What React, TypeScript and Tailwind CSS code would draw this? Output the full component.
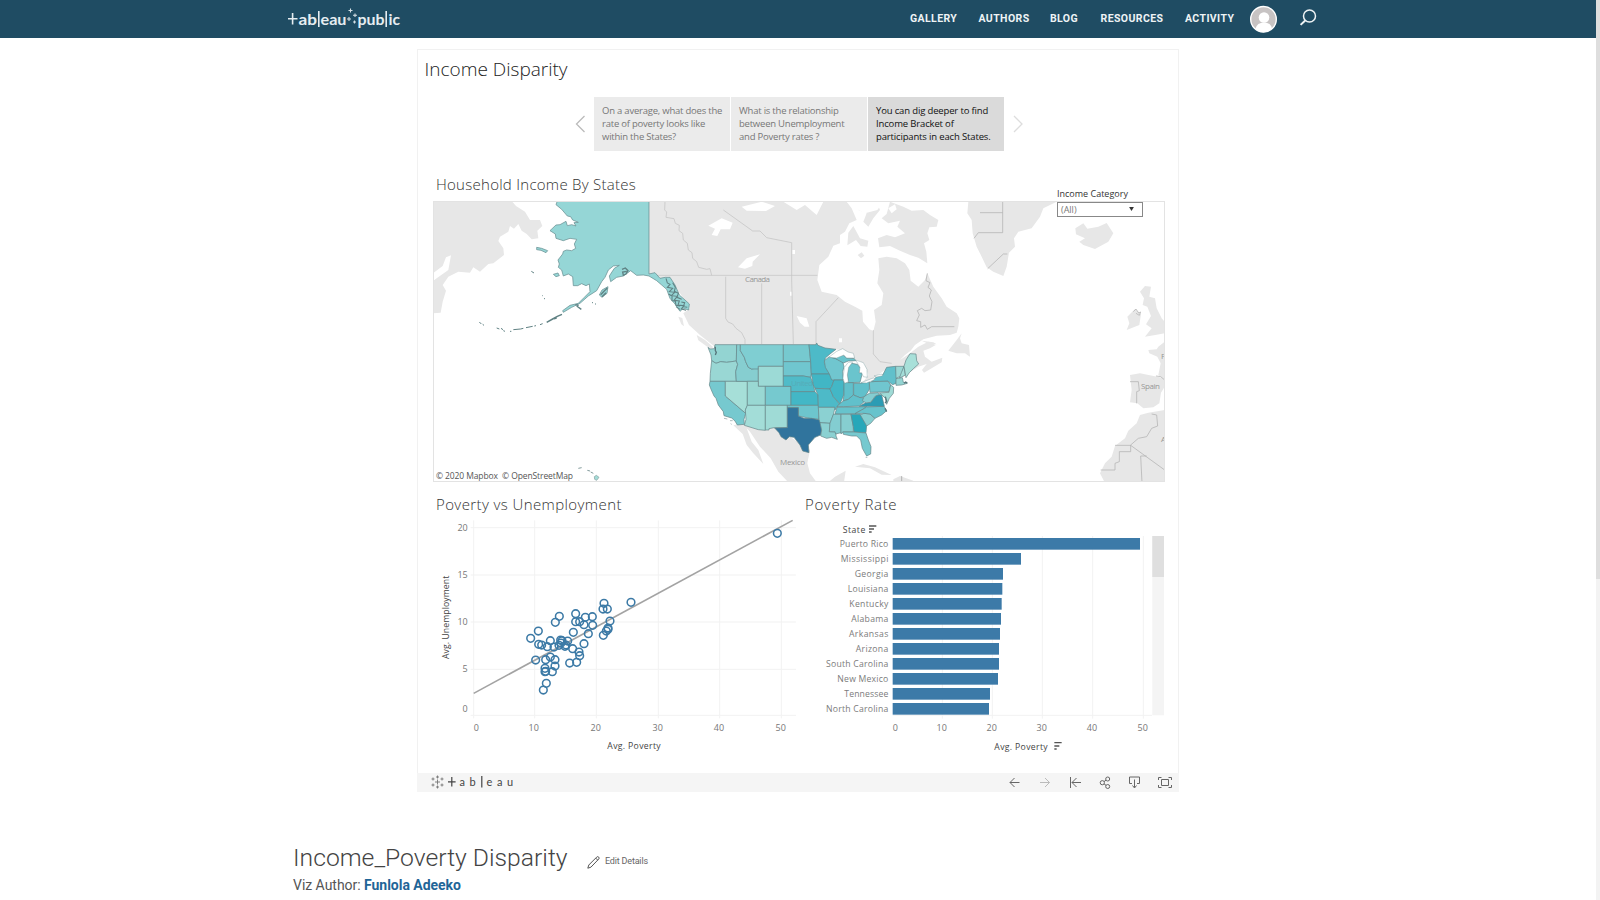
import React from "react";

type Pt = [number, number];

const STATES: [string, string][] = [
  ["24,52 30,57 43,56 45,44 110,44 109,93 80,97 62,95 48,100 35,92 33,75", "#93d4d2"],
  ["35,92 48,100 62,95 80,97 109,93 113,103 107,125 109,154 30,154 31,130", "#99d7d4"],
  ["30,154 76,154 76,198 137,250 132,268 133,283 112,285 105,273 95,264 72,257 70,245 55,225 48,205 42,198 34,180 28,165", "#76c9cf"],
  ["76,154 142,154 142,226 136,240 137,250 76,198", "#a6dfd8"],
  ["110,44 121,44 121,62 133,82 137,95 145,112 155,117 175,113 175,154 109,154 107,125 113,103 109,93", "#86ced0"],
  ["121,44 250,44 250,109 175,109 175,117 155,117 145,112 137,95 133,82 121,62", "#7fced2"],
  ["175,109 250,109 250,169 175,169", "#9cdad6"],
  ["142,154 175,154 175,169 196,169 196,226 142,226", "#99d8d3"],
  ["196,169 273,169 273,226 196,226", "#76c9cf"],
  ["142,226 196,226 196,301 175,299 133,286 138,268 136,240", "#a3ddd8"],
  ["196,226 262,226 262,293 222,293 207,296 207,300 196,300", "#9fdbd6"],
  ["250,44 327,44 332,95 250,95", "#76c9cf"],
  ["250,95 332,95 334,132 332,142 310,138 250,138", "#70c6cf"],
  ["250,138 310,138 332,142 340,165 345,185 273,185 273,169 250,169", "#50bbc8"],
  ["273,185 345,185 354,195 355,226 273,226", "#43b7c6"],
  ["262,226 355,226 357,268 330,265 295,258 295,233 262,233", "#6dc5cd"],
  ["262,233 295,233 295,258 312,265 335,265 360,270 365,300 362,315 345,322 325,345 327,368 308,363 300,345 282,322 268,320 258,330 243,320 237,308 224,294 262,293", "#30749d"],
  ["327,44 348,44 350,39 354,46 375,54 408,58 390,72 376,84 373,97 380,115 390,132 334,132 332,95", "#4dbac8"],
  ["334,132 390,132 402,150 395,170 390,177 345,175 340,165", "#41b6c5"],
  ["345,175 390,177 400,200 418,222 410,232 405,240 403,232 355,232 354,195", "#4dbac8"],
  ["355,232 405,232 400,255 390,280 360,278 357,268", "#8bd1d2"],
  ["360,278 390,280 388,305 408,306 408,318 412,328 395,322 380,325 362,318 365,300", "#8bd1d2"],
  ["373,92 388,80 405,85 428,95 432,110 428,125 430,150 395,150 388,132 376,112", "#70c6cf"],
  ["402,150 429,150 433,160 431,195 420,222 400,200 390,177 395,170", "#43b7c6"],
  ["444,112 455,100 472,103 482,115 478,128 487,130 480,157 445,158 442,135", "#6ac4cd"],
  ["392,82 430,76 440,84 463,86 468,92 445,93 430,99 405,85", "#6ac4cd"],
  ["432,158 460,158 460,195 445,208 429,213 432,195", "#61c0cb"],
  ["461,160 480,160 508,155 508,178 495,200 480,203 461,195", "#61c0cb"],
  ["411,230 418,222 430,213 445,208 460,195 480,203 490,203 495,213 478,228 430,230", "#61c0cb"],
  ["405,252 411,232 500,230 485,240 465,251", "#67c3cc"],
  ["390,280 400,253 423,253 423,308 407,312 405,305 388,305", "#83cdd1"],
  ["423,253 453,253 460,290 460,306 428,306 423,312", "#86ced0"],
  ["453,253 481,253 500,285 498,308 462,306 460,290", "#27a7b9"],
  ["428,306 460,306 498,309 505,330 513,350 512,372 500,378 487,355 482,330 470,318 455,318 430,313", "#76c9cf"],
  ["481,255 492,250 510,252 525,265 512,280 500,288", "#86ced0"],
  ["465,251 485,240 500,231 552,229 560,242 545,255 525,265 510,252 492,250", "#67c3cc"],
  ["478,229 497,218 512,217 530,195 545,194 553,229", "#2b9cb4"],
  ["487,212 492,200 508,190 535,188 538,194 526,198 512,217 498,219", "#83cdd1"],
  ["508,158 515,155 563,153 572,165 567,185 510,187", "#70c6cf"],
  ["515,155 530,140 548,135 560,112 587,109 590,145 588,160 578,164 563,153", "#61c0cb"],
  ["587,109 612,109 604,138 588,145", "#99d7d4"],
  ["612,109 616,135 598,145 604,128", "#a3ddd8"],
  ["612,109 618,90 630,71 648,72 650,92 656,102 640,116 628,128 618,143", "#a8e0d9"],
  ["588,146 607,143 610,157 622,160 605,165 588,166", "#93d4d2"],
  ["572,165 581,172 580,190 568,205 560,223 556,205 545,194 538,189 567,187", "#9fdbd6"],
];

const POINTS: Pt[] = [
  [1042, 131], [603, 338], [522, 341], [519, 358], [532, 358], [437, 372], [388, 380], [466, 383], [487, 381],
  [376, 398], [437, 396], [449, 396], [540, 394], [462, 405], [488, 407], [534, 415], [325, 424], [430, 428],
  [475, 432], [534, 419], [529, 424], [520, 437], [302, 446], [361, 453], [392, 451], [396, 453], [413, 454],
  [326, 464], [335, 466], [352, 471], [372, 472], [387, 467], [393, 460], [405, 470], [408, 466], [462, 462],
  [428, 477], [447, 487], [449, 498], [361, 502], [317, 511], [347, 510], [375, 510], [419, 520], [440, 518],
  [375, 529], [345, 536], [345, 546], [347, 545], [367, 546], [349, 581], [340, 601],
];

const BARS: [string, number, number][] = [
  ["Puerto Rico", 1020, 119], ["Mississippi", 663, 122], ["Georgia", 609, 164], ["Louisiana", 607, 143],
  ["Kentucky", 605, 148], ["Alabama", 603, 154], ["Arkansas", 600, 147], ["Arizona", 597, 167],
  ["South Carolina", 597, 78], ["New Mexico", 594, 112], ["Tennessee", 570, 133], ["North Carolina", 567, 78],
];

const SANS = "font-['Open_Sans','Noto_Sans',sans-serif]";

function IncomeMap() {
  return (
    <svg viewBox="433 201 732 281" className="block h-[281px] w-[732px]" fill="none">
      <g transform="translate(430 170) scale(.333333)">
        <g fill="#e7e7e7">
          <path d="M9,93H245L258,108L285,125L300,150L330,150L337,168L322,182L325,205L305,208L290,192L275,182L265,162L252,176L240,168L235,185L210,200L205,213L220,235L222,255L190,280L175,282L150,305L130,292L120,308L85,305L55,320L38,345L48,362L38,395L32,428L9,430Z" />
          <path d="M9,310L38,288L48,262L63,256L55,300L20,325L9,333Z" fill="#fff" />
          <path d="M745,440l12,4 5,25-8-6ZM800,495l25,15 25,22-10,4-35-25Z" />
        </g>
        <g transform="translate(1080 60)">
          <path fill="#e7e7e7" d="M-423,35H170L185,55L200,90L178,100L165,125L150,135L150,160L130,167L115,200L88,225L82,270L95,305L140,315L165,335L195,350L217,362L219,395L238,418L250,423L257,395L252,360L275,345L280,310L262,280L268,240L265,205L290,200L320,205L345,220L358,240L362,272L385,290L405,270L412,250L430,290L455,325L470,350L500,370L508,385L505,410L500,428L480,435L440,437L400,448L375,465L362,482L345,495L330,510L360,490L385,470L415,455L437,465L420,475L400,482L405,500L425,515L457,503L455,517L425,535L402,548L396,540L410,522L385,530L340,560L285,540L250,565L215,582L235,555L222,520L190,505L160,480L80,475L-220,475L-270,435L-303,405L-320,370L-300,355L-330,310L-375,270L-423,255Z" />
          <g fill="#e7e7e7">
            <path d="M300,35L340,50L365,62L400,60L420,75L445,90L440,110L418,112L412,130L418,150L402,160L409,185L412,220L385,203L360,195L330,182L300,168L268,172L264,145L290,135L315,142L345,130L322,110L330,92L295,100L275,85L290,72Z" />
            <path d="M200,35H260L270,60L250,85L235,110L220,95L230,70L205,60Z" />
            <path d="M175,128L190,108L210,145L235,152L232,170L212,168L198,150L172,166Z" />
            <path d="M203,195l12,-8 8,10-10,8Z" />
            <path d="M515,430L500,450L475,482L500,490L525,490L540,500L537,465L515,460L510,445ZM395,452l35,5 10,6-25,-2Z" />
            <path d="M535,35H800L760,55L750,80L725,115L685,125L672,145L675,170L657,188L650,230L640,258L610,245L590,232L575,200L560,170L548,130L545,90L532,70Z" />
            <path d="M856,115L880,100L892,116L925,110L950,99L970,130L955,155L915,177L880,165L868,155L885,145L858,133Z" />
            <path d="M1050,305L1065,288L1083,290L1078,320L1095,325L1100,355L1115,385L1124,395V430L1100,434L1065,440L1085,415L1068,403L1083,378L1072,350L1058,345L1062,325Z" />
            <path d="M1012,380L1035,357L1053,372L1048,405L1010,420L1018,400Z" />
            <path d="M1124,455L1105,470L1100,478L1075,480L1078,490L1102,500L1112,520L1105,555L1124,570Z" />
            <path d="M1020,555L1050,550L1124,565V590L1113,608L1108,640L1090,652L1060,655L1042,640L1020,637L1025,600Z" />
            <path d="M1124,660L1075,668L1050,675L1040,700L1015,722L1005,745L975,768L965,800L945,820L930,850L945,879H1124Z" />
          </g>
          <g fill="#fff">
            <path d="M-245,107L-205,85L-172,98L-180,118L-208,118L-218,138L-235,135L-225,116ZM-156,232L-130,205L-90,193L-112,215L-113,228L-135,236ZM-145,50L-85,35L-45,48L-72,63L-130,62ZM-20,35H100L80,75L65,62L45,45L20,60Z" />
            <path d="M20,378L50,385L58,410L44,410L30,398ZM7,180h8v12h-8ZM0,305h6v12h-6ZM147,445h9v12h-9ZM170,35L280,35L262,60L225,70L195,55ZM295,55l20,-12 5,15-15,12Z" />
          </g>
          <g stroke="#c2c2c2" strokeWidth="2.2">
            <path d="M-375,35L-376,60L-370,66L-372,82L-348,86L-344,100L-332,106L-333,122L-322,130L-320,150L-308,160L-305,180L-294,188L-292,205L-280,215L-274,232L-250,238L-240,236L-235,256M-200,60L-112,123L-90,123L-70,143L5,158V270L10,462M-420,256H82M-193,260V385M-193,385L-186,396L-172,402L-162,415L-145,428L-135,448V462M-85,280V462M78,465V395L145,323M250,420V492L270,515L305,520" />
            <path stroke="#b0b0b0" d="M412,250L408,272L420,278L414,292L424,300L418,318L426,335L422,360L405,362L395,355L382,362L388,375L380,392L392,395L392,412L405,405L412,418L425,410H493" />
          </g>
          <g stroke="#b1b1b1" strokeWidth="2.2">
            <path d="M570,68H638M638,35V128H565L552,145M593,236L640,192H652M1030,365l8,-8 8,12 6,-3-4,10-10,-6M1098,558L1112,560L1124,570M1020,575L1045,575L1048,602L1040,605L1040,640M1085,672L1100,675L1103,708L1085,715L1070,740L1045,745L1022,765V785H988V815L975,820V840H932M975,766H1022L1124,840M1056,877L1052,798H1070" />
          </g>
        </g>
        <g transform="translate(810 480)">
          <path fill="#e7e7e7" d="M100,286L130,280L225,290L330,360L322,400L330,430L350,457H265L235,425L212,385L180,350L150,305L140,295L155,335L175,360L190,402L160,370L140,345L128,312ZM405,440L437,422L432,457H385ZM465,410L490,402L525,412L575,435L545,434L510,415ZM580,448L600,438L640,452L635,458H580ZM660,454h18v4h-18Z" />
          <path stroke="#999" strokeWidth="2" d="M605,438V458" />
          <g stroke="#66868a" strokeWidth="2.1" strokeLinejoin="round">
            {STATES.map(([p, c]) => <polygon key={p} points={p} fill={c} />)}
          </g>
          <g fill="#fff" stroke="#75989b" strokeWidth="1.2">
            <path d="M386,82L410,64L428,56L444,66L460,70L464,84L440,84L432,75L410,84Z" />
            <path d="M433,112L445,97L458,96L446,112L442,135L445,155L434,160L429,145Z" />
            <path d="M467,90L490,98L501,118L502,142L490,140L485,128L478,128L480,112Z" />
            <path d="M483,158L520,144L525,148L500,159ZM522,138L545,132L548,137L530,141Z" />
          </g>
          <path stroke="#57767b" strokeWidth="4" d="M46,50v12l3,5-3,8M612,160l5,-4 5,3M556,200l4,14-5,5M555,235l5,10" />
          <path stroke="#86999b" strokeWidth="2" d="M72,265l10,2M90,272h8M92,281l3,2M497,382h5" />
        </g>
        <g stroke="#688f91" strokeWidth="2.2" strokeLinejoin="round" fill="#95d6d6">
          <path d="M383,90H657V312L675,308L690,325L706,322L720,322L735,345L748,375L765,390L778,402L776,420L760,415L750,424L735,402L720,385L710,358L695,345L680,332L657,318L640,315L620,316L602,302L580,318L560,322L542,335L538,318L553,295L568,286L550,288L535,300L525,322L515,335L500,362L475,378L450,400L425,412L400,427L398,422L420,406L445,400L462,383L480,365L478,342L468,347L455,341L443,347L430,347L428,320L415,312L400,318L395,300L385,292L388,282L384,270L398,252L400,244L410,240L425,242L437,235L433,222L440,208L420,205L400,212L378,205L376,192L360,182L378,165L390,164L408,154L412,167L425,164L438,168L432,158L445,157L428,150L422,140L412,138L395,118L378,104Z" />
          <path d="M320,232l15,3 18,7-5,6-15,-7-13,-2ZM370,313l14,-4 4,8-10,3ZM508,375l8,-15 18,-10-3,20-15,12Z" />
        </g>
        <g stroke="#5f8183" strokeWidth="4">
          <path d="M708,325l4,14 8,4-8,9 16,3-10,10 16,2-10,10 18,2-10,12 16,2-4,12 18,2-8,10 14,4M716,372l10,6 0,14 10,2 2,12 12,2M728,338l8,14-3,12 12,6-4,12 14,6M754,396l10,2-4,12 12,2M738,410l12,8" strokeWidth="3.2" />
          <path d="M576,298l10,-4 8,8-6,10-8,4-2,-10 12,-2M512,374l10,-10 10,-10M516,380l12,-12M440,408l14,10M436,404l10,2" />
          <path d="M350,457l18,-10 14,-8 14,-6M372,446l8,-2" strokeWidth="4.5" />
          <path d="M148,456l6,6M158,463l4,3M200,474l8,3M213,475l6,4M220,482l5,2M240,484h4M250,479l22,-2 8,-2M288,473l20,-4M313,468l5,-1M330,464l8,-3M304,304l8,5M337,377h2M342,386h3M486,398h3M495,402h3" strokeWidth="3" />
        </g>
        <path d="M445,895l10,-2M472,901l8,2M482,906l8,4" stroke="#829b9c" strokeWidth="3" />
        <path d="M493,920l6,-4 8,6-7,9-6,-3Z" stroke="#829b9c" strokeWidth="2" fill="#a3ddd8" />
      </g>
      <g className={SANS} fontSize="8" fill="#979797">
        <text x="745" y="282" textLength="25">Canada</text>
        <text x="780" y="465" textLength="25">Mexico</text>
        <text x="1141" y="389" textLength="19">Spain</text>
        <text x="1161" y="359">F</text>
        <text x="1161" y="442">A</text>
        <text x="791" y="386" textLength="22" fill="#5c9fab" opacity=".5">United</text>
      </g>
      <text x="436" y="479" fontSize="8.5" textLength="137" className={SANS} fill="#555" xmlSpace="preserve">© 2020 Mapbox  © OpenStreetMap</text>
    </svg>
  );
}

function Scatter() {
  return (
    <svg viewBox="430 519 370 254" className="block h-[254px] w-[370px]" fill="none">
      <g transform="translate(430 489.7) scale(.333333)">
        <g stroke="#f2f2f2" strokeWidth="3">
          <path d="M131,92V686M314,92V686M499,92V686M685,92V686M869,92V686M1054,92V686M122,114H1098M122,256H1098M122,397H1098M122,539H1098M122,677H1098" />
        </g>
        <path d="M131,611L1088,92" stroke="#a3a3a3" strokeWidth="4.8" />
        <g stroke="#3c7aa6" strokeWidth="4.6">
          {POINTS.map(([x, y], i) => <circle key={i} cx={x} cy={y} r="11.5" />)}
        </g>
        <g className={SANS} fontSize="27" fill="#777">
          {[[20, 114], [15, 256], [10, 396], [5, 538], [0, 656]].map(([v, y]) => (
            <text key={v} x="113" y={y + 10} textAnchor="end">{v}</text>
          ))}
          {[139, 311, 497, 683, 867, 1052].map((x, i) => (
            <text key={x} x={x} y="723" textAnchor="middle">{i * 10}</text>
          ))}
        </g>
        <g className={SANS} fontSize="26" fill="#444">
          <text x="532" y="779" textLength="160">Avg. Poverty</text>
          <text transform="translate(56 508) rotate(-90)" textLength="250">Avg. Unemployment</text>
        </g>
      </g>
    </svg>
  );
}

function Bars() {
  return (
    <svg viewBox="800 519 374 254" className="block h-[254px] w-[374px]" fill="none">
      <g transform="translate(800 490) scale(.333333)">
        <path d="M427,138V686M577,138V686M727,138V686M878,138V686M1030,138V686M278,676H1056" stroke="#f2f2f2" strokeWidth="3" />
        <path d="M1057,138h35v538h-35Z" fill="#f4f4f4" />
        <path d="M1057,138h35v123h-35Z" fill="#dfdfdf" />
        <g className={SANS} fontSize="26">
          {BARS.map(([name, end, left], i) => (
            <g key={name}>
              <rect x="278" y={144 + i * 45} width={end - 278} height="35" fill="#3c7aa8" />
              <text x={left} y={171 + i * 45} textLength={265 - left} fill="#7b7b7b">{name}</text>
            </g>
          ))}
          <text x="128" y="128" textLength="68" fill="#444">State</text>
          <text x="583" y="779" textLength="160" fill="#444">Avg. Poverty</text>
        </g>
        <path d="M207,108h22M207,117h15M207,126h8M763,758h22M763,768h15M763,777h7" stroke="#555" strokeWidth="4" />
        <g className={SANS} fontSize="27" fill="#777">
          {[286, 425, 575, 725, 876, 1028].map((x, i) => (
            <text key={x} x={x} y="723" textAnchor="middle">{i * 10}</text>
          ))}
        </g>
      </g>
    </svg>
  );
}

function Logo() {
  return (
    <svg viewBox="288 6 114 26" className="block h-[26px] w-[114px]" fill="none">
      <path d="M292.6 13v11.5M288 18.8h9.5M318.8 11v16M386.2 11v16" stroke="#e6edf1" strokeWidth="1.6" />
      <g fill="#e6edf1" fontSize="15.5" className="font-['Lato',sans-serif]">
        <text x="298.5" y="24.5" textLength="18.5" lengthAdjust="spacingAndGlyphs">ab</text>
        <text x="320.5" y="24.5" textLength="26" lengthAdjust="spacingAndGlyphs">eau</text>
        <text x="357.5" y="24.5" textLength="27" lengthAdjust="spacingAndGlyphs">pub</text>
        <text x="388.5" y="24.5" textLength="11.5" lengthAdjust="spacingAndGlyphs">ic</text>
      </g>
      <path d="M350.5 8.5v4M348.5 10.5h4M349 17v4M347 19h4M355 13.5v3.5M353 15.2h4M354.5 20.5v3M353 22h3" stroke="#d5e0e6" strokeWidth="1.1" />
    </svg>
  );
}

function Toolbar() {
  return (
    <div className="-mx-px flex h-[19px] items-center justify-between bg-[#f5f5f5] pr-[5px] pl-[13px]">
      <svg viewBox="430 773 86 19" className="block h-[19px] w-[86px]" fill="none">
        <path d="M437.5 779.5v5M435 782h5M437.5 775.5v3M436 777h3M437.5 785.5v3M436 787h3M433 777.5v3M431.5 779h3M433 783.5v3M431.5 785h3M442 777.5v3M440.5 779h3M442 783.5v3M440.5 785h3" stroke="#777" strokeWidth=".9" />
        <path d="M451.8 777v9.5M448 781.8h7.6M481.8 776v11.5" stroke="#444" strokeWidth="1.2" />
        <g className="font-['Lato',sans-serif]" fontSize="11" fill="#444">
          <text x="459.5" y="786">a</text><text x="469.5" y="786">b</text><text x="486.5" y="786">e</text><text x="497" y="786">a</text><text x="507" y="786">u</text>
        </g>
      </svg>
      <svg viewBox="1006 773 168 19" className="block h-[19px] w-[168px]" fill="none" stroke="#666" strokeWidth="1">
        <path d="M1019.5 782.5h-9.5M1014.5 778l-4.5 4.5 4.5 4.5" />
        <path d="M1040 782.5h9.5M1045 778l4.5 4.5-4.5 4.5" stroke="#bbb" />
        <path d="M1070.5 777v11M1081 782.5h-9M1076.5 778l-4.5 4.5 4.5 4.5" />
        <circle cx="1102.3" cy="782.7" r="2.1" /><circle cx="1107.7" cy="779" r="2" /><circle cx="1107.7" cy="786.5" r="2" />
        <path d="M1104 781.6l2-1.4M1104 783.8l2 1.5" />
        <path d="M1132 783.5h-2.5v-6.5h10v6.5h-2.5M1134.5 779.5v8M1132.5 785.5l2 2.5 2-2.5" />
        <path d="M1161.5 779.5h7v6h-7ZM1158.5 780v-2.5h3M1168.5 777.5h3v2.5M1171.5 785v2.5h-3M1161.5 787.5h-3v-2.5" />
      </svg>
    </div>
  );
}

function StoryPoint({ lines, active }: { lines: string[]; active?: boolean }) {
  return (
    <div className={`h-[54px] w-[136px] pt-[7px] pl-2 text-[9.5px] leading-[13px] whitespace-nowrap ${active ? "bg-[#dadada] text-[#111]" : "bg-[#ebebeb] text-[#777]"}`}>
      {lines.map((l) => <div key={l} className={active ? "tracking-[-0.15px]" : "tracking-[-0.22px]"}>{l}</div>)}
    </div>
  );
}

export default function App() {
  return (
    <div className={`flex h-[900px] w-[1600px] overflow-hidden bg-white ${SANS}`}>
      <div className="flex w-[1596px] flex-col">
        <header className="flex h-[38px] shrink-0 items-center bg-[#1f4c63] pl-[288px] font-['Roboto',sans-serif] text-[10.5px] font-bold text-[#eef3f5]">
          <Logo />
          <nav className="ml-[508px] flex tracking-[0.4px] whitespace-nowrap">
            <a className="w-[68.5px]">GALLERY</a>
            <a className="w-[71.5px]">AUTHORS</a>
            <a className="w-[50.5px]">BLOG</a>
            <a className="w-[84.5px]">RESOURCES</a>
            <a className="w-[65px]">ACTIVITY</a>
          </nav>
          <svg viewBox="0 0 70 28" className="block h-7 w-[70px]" fill="none">
            <circle cx="13.5" cy="14.3" r="12.8" fill="#c7c3c3" stroke="#fff" strokeWidth="1.4" />
            <circle cx="14" cy="12.5" r="5.3" fill="#fff" />
            <path d="M5.5 23.5Q7 17.5 14 17.5T22 23.5Q18 27.3 13.5 27.3T5.5 23.5Z" fill="#fff" />
            <circle cx="59.5" cy="11" r="6" stroke="#eef3f5" strokeWidth="1.5" />
            <path d="M55.2 15.5l-4.6 4.4" stroke="#eef3f5" strokeWidth="2" />
          </svg>
        </header>

        <section className="relative mt-[11px] ml-[417px] flex h-[743px] w-[762px] shrink-0 flex-col border border-b-0 border-[#f1f1f1]">
          <h2 className="h-[47px] pt-[5px] pl-[6.5px] text-[19px] leading-[28px] font-light text-[#222]">Income Disparity</h2>
          <div className="flex h-[54px] items-center pl-[156px]">
            <svg viewBox="0 0 20 20" className="h-5 w-5" fill="none"><path d="M10.5 2L2.5 10l8 8" stroke="#bbb" strokeWidth="1.3" /></svg>
            <div className="flex gap-px">
              <StoryPoint lines={["On a average, what does the", "rate of poverty looks like", "within the States?"]} />
              <StoryPoint lines={["What is the relationship", "between Unemployment", "and Poverty rates ?"]} />
              <StoryPoint active lines={["You can dig deeper to find", "Income Bracket of", "participants in each States."]} />
            </div>
            <svg viewBox="0 0 20 20" className="h-5 w-5" fill="none"><path d="M10 2l8 8-8 8" stroke="#ddd" strokeWidth="1.3" /></svg>
          </div>
          <h3 className="mt-[23px] h-[27px] pl-[18px] text-[15px] leading-[21px] font-light tracking-[0.27px] text-[#333]">Household Income By States</h3>
          <div className="ml-[15px] box-content w-[732px] outline outline-1 -outline-offset-1 outline-[#e3e3e3]">
            <IncomeMap />
          </div>
          <div className="absolute top-[136px] left-[639px] w-[86px] text-[9px] leading-[16px] text-[#333]">
            <div className="whitespace-nowrap">Income Category</div>
            <div className="flex h-[15px] items-center justify-between border border-[#888] bg-white pr-[8px] pl-[3px] text-[#777]">
              <span>(All)</span>
              <svg viewBox="0 0 6 5" className="mb-[2px] h-[4px] w-[5px]"><path d="M0 0h6L3 5Z" fill="#333" /></svg>
            </div>
          </div>
          <div className="mt-[12px] flex h-[25px] text-[15px] leading-[21px] font-light text-[#333]">
            <h3 className="w-[369px] pl-[18px] tracking-[0.4px]">Poverty vs Unemployment</h3>
            <h3 className="pl-[18px] tracking-[0.65px]">Poverty Rate</h3>
          </div>
          <div className="flex pl-[12px]">
            <Scatter />
            <Bars />
          </div>
          <Toolbar />
        </section>

        <footer className="mt-[48px] ml-[293px] font-['Roboto',sans-serif] text-[#444]">
          <div className="flex h-[35px] items-center">
            <h1 className="w-[294px] text-[24.7px] leading-[35px] font-light whitespace-nowrap">Income_Poverty Disparity</h1>
            <svg viewBox="0 0 13 13" className="mt-[9px] h-[13px] w-[13px]" fill="none"><path d="M.8 12.2l1-3.2L9.7 1.1q1-1 2 0t0 2L3.9 11.2ZM8.7 2.1l2 2" stroke="#555" /></svg>
            <span className="mt-[9px] ml-[5px] text-[9px] tracking-[-0.18px] text-[#666]">Edit Details</span>
          </div>
          <div className="text-[14px] leading-5 tracking-[-0.03px] whitespace-nowrap text-[#555]">Viz Author: <b className="font-bold text-[#1f6597]">Funlola Adeeko</b></div>
        </footer>
      </div>
      <div className="w-1 bg-[#f3f3f3]"><div className="h-[579px] bg-[#dedede]" /></div>
    </div>
  );
}
